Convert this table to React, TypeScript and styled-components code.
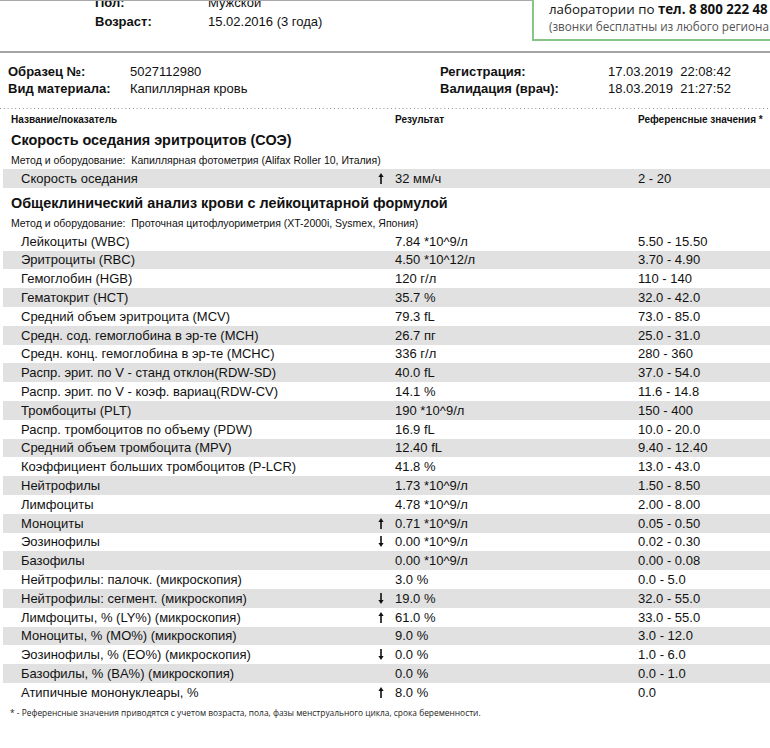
import React from "react";
import styled, { createGlobalStyle } from "styled-components";

const Global = createGlobalStyle`
  html, body { margin: 0; padding: 0; background: #fff; }
  body { font-family: "Liberation Sans", Arial, sans-serif; color: #111; }
`;

const Page = styled.div`
  width: 770px;
  height: 748px;
  overflow: hidden;
  background: #fff;
`;

const TopSection = styled.div`
  display: flex;
  align-items: flex-start;
  height: 51px;
  border-bottom: 2px solid #a4a4a4;
`;

const PatientBlock = styled.div`
  flex: 0 0 532px;
  height: 40px;
  border-top: 1px solid #a8a8a8;
  overflow: hidden;
`;

const PatientGrid = styled.div`
  display: grid;
  grid-template-columns: 113px 1fr;
  grid-auto-rows: 19px;
  align-items: center;
  margin-top: -8px;
  padding-left: 95px;
  font-size: 13px;
`;

const Label = styled.div`
  font-weight: bold;
  white-space: nowrap;
`;

const Value = styled.div`
  white-space: nowrap;
`;

const PromoBox = styled.div`
  flex: 1 1 auto;
  height: 41px;
  border: 2px solid #86c586;
  border-top: none;
  border-right: none;
  box-sizing: border-box;
  padding-left: 15px;
  font-family: "Open Sans", sans-serif;
  overflow: hidden;
  white-space: nowrap;
`;

const PromoLine = styled.div<{ $muted?: boolean }>`
  font-size: ${(p) => (p.$muted ? "11.7px" : "13.3px")};
  line-height: ${(p) => (p.$muted ? "16px" : "18px")};
  color: ${(p) => (p.$muted ? "#555" : "#111")};
  b { font-weight: 700; }
`;

const InfoGrid = styled.div`
  display: grid;
  grid-template-columns: 122px 310px 168px 1fr;
  grid-auto-rows: 17px;
  align-items: center;
  padding: 10px 0 0 8px;
  height: 55px;
  box-sizing: border-box;
  font-size: 13px;
`;

const Dotted = styled.div`
  height: 1px;
  background-image: linear-gradient(to right, #8a8a8a 1.4px, transparent 1.4px);
  background-size: 3.8px 1px;
`;

const HeaderRow = styled.div`
  display: grid;
  grid-template-columns: 384px 243px 1fr;
  align-items: center;
  height: 20px;
  padding-left: 11px;
  font-size: 10px;
  font-weight: bold;
  white-space: nowrap;
`;

const SectionTitle = styled.div`
  height: 22px;
  line-height: 22px;
  padding-left: 11px;
  font-size: 14.4px;
  font-weight: bold;
  white-space: nowrap;
`;

const Method = styled.div`
  height: 18px;
  line-height: 18px;
  padding-left: 11px;
  font-size: 10.5px;
  white-space: pre;
`;

const Rows = styled.div`
  margin: 0 0 4px 3px;
`;

const Row = styled.div<{ $shaded: boolean }>`
  display: grid;
  grid-template-columns: 372px 20px 243px 1fr;
  align-items: center;
  height: 18.8px;
  background: ${(p) => (p.$shaded ? "#e1e1e1" : "transparent")};
  font-size: 13px;
  white-space: nowrap;
`;

const Name = styled.div`
  padding-left: 18px;
`;

const ArrowCell = styled.div`
  display: flex;
  align-items: center;
  padding-left: 3px;
`;

const Footer = styled.div`
  margin-top: 4px;
  padding-left: 10px;
  font-family: "Open Sans", sans-serif;
  font-size: 8.4px;
  line-height: 14px;
  color: #222;
  white-space: nowrap;
`;

type Flag = "up" | "down" | undefined;

const Arrow = ({ dir }: { dir: Flag }) => {
  if (!dir) return null;
  return (
    <svg width="6" height="11" viewBox="0 0 6 11" aria-hidden="true">
      {dir === "up" ? (
        <>
          <polygon points="3,0 5.6,4 0.4,4" fill="#111" />
          <rect x="2.2" y="3" width="1.6" height="8" fill="#111" />
        </>
      ) : (
        <>
          <polygon points="3,11 5.6,7 0.4,7" fill="#111" />
          <rect x="2.2" y="0" width="1.6" height="8" fill="#111" />
        </>
      )}
    </svg>
  );
};

type Item = [string, Flag, string, string];

const esr: Item[] = [["Скорость оседания", "up", "32 мм/ч", "2 - 20"]];

const cbc: Item[] = [
  ["Лейкоциты (WBC)", undefined, "7.84 *10^9/л", "5.50 - 15.50"],
  ["Эритроциты (RBC)", undefined, "4.50 *10^12/л", "3.70 - 4.90"],
  ["Гемоглобин (HGB)", undefined, "120 г/л", "110 - 140"],
  ["Гематокрит (HCT)", undefined, "35.7 %", "32.0 - 42.0"],
  ["Средний объем эритроцита (MCV)", undefined, "79.3 fL", "73.0 - 85.0"],
  ["Средн. сод. гемоглобина в эр-те (MCH)", undefined, "26.7 пг", "25.0 - 31.0"],
  ["Средн. конц. гемоглобина в эр-те (MCHC)", undefined, "336 г/л", "280 - 360"],
  ["Распр. эрит. по V - станд отклон(RDW-SD)", undefined, "40.0 fL", "37.0 - 54.0"],
  ["Распр. эрит. по V - коэф. вариац(RDW-CV)", undefined, "14.1 %", "11.6 - 14.8"],
  ["Тромбоциты (PLT)", undefined, "190 *10^9/л", "150 - 400"],
  ["Распр. тромбоцитов по объему (PDW)", undefined, "16.9 fL", "10.0 - 20.0"],
  ["Средний объем тромбоцита (MPV)", undefined, "12.40 fL", "9.40 - 12.40"],
  ["Коэффициент больших тромбоцитов (P-LCR)", undefined, "41.8 %", "13.0 - 43.0"],
  ["Нейтрофилы", undefined, "1.73 *10^9/л", "1.50 - 8.50"],
  ["Лимфоциты", undefined, "4.78 *10^9/л", "2.00 - 8.00"],
  ["Моноциты", "up", "0.71 *10^9/л", "0.05 - 0.50"],
  ["Эозинофилы", "down", "0.00 *10^9/л", "0.02 - 0.30"],
  ["Базофилы", undefined, "0.00 *10^9/л", "0.00 - 0.08"],
  ["Нейтрофилы: палочк. (микроскопия)", undefined, "3.0 %", "0.0 - 5.0"],
  ["Нейтрофилы: сегмент. (микроскопия)", "down", "19.0 %", "32.0 - 55.0"],
  ["Лимфоциты, % (LY%) (микроскопия)", "up", "61.0 %", "33.0 - 55.0"],
  ["Моноциты, % (MO%) (микроскопия)", undefined, "9.0 %", "3.0 - 12.0"],
  ["Эозинофилы, % (EO%) (микроскопия)", "down", "0.0 %", "1.0 - 6.0"],
  ["Базофилы, % (BA%) (микроскопия)", undefined, "0.0 %", "0.0 - 1.0"],
  ["Атипичные мононуклеары, %", "up", "8.0 %", "0.0"],
];

const ResultRows = ({ items, startShaded }: { items: Item[]; startShaded: boolean }) => (
  <Rows>
    {items.map(([name, flag, value, ref], i) => (
      <Row key={name} $shaded={startShaded ? i % 2 === 0 : i % 2 === 1}>
        <Name>{name}</Name>
        <ArrowCell>
          <Arrow dir={flag} />
        </ArrowCell>
        <div>{value}</div>
        <div>{ref}</div>
      </Row>
    ))}
  </Rows>
);

export default function App() {
  return (
    <Page>
      <Global />
      <TopSection>
        <PatientBlock>
          <PatientGrid>
            <Label>Пол:</Label>
            <Value>Мужской</Value>
            <Label>Возраст:</Label>
            <Value>15.02.2016 (3 года)</Value>
          </PatientGrid>
        </PatientBlock>
        <PromoBox>
          <PromoLine>
            лаборатории по <b>тел. 8 800 222 48 30</b>
          </PromoLine>
          <PromoLine $muted>(звонки бесплатны из любого региона России)</PromoLine>
        </PromoBox>
      </TopSection>

      <InfoGrid>
        <Label>Образец №:</Label>
        <Value>5027112980</Value>
        <Label>Регистрация:</Label>
        <Value>17.03.2019&nbsp;&nbsp;22:08:42</Value>
        <Label>Вид материала:</Label>
        <Value>Капиллярная кровь</Value>
        <Label>Валидация (врач):</Label>
        <Value>18.03.2019&nbsp;&nbsp;21:27:52</Value>
      </InfoGrid>

      <Dotted />

      <HeaderRow>
        <div>Название/показатель</div>
        <div>Результат</div>
        <div>Референсные значения *</div>
      </HeaderRow>

      <SectionTitle>Скорость оседания эритроцитов (СОЭ)</SectionTitle>
      <Method>{"Метод и оборудование:  Капиллярная фотометрия (Alifax Roller 10, Италия)"}</Method>
      <ResultRows items={esr} startShaded />

      <SectionTitle>Общеклинический анализ крови с лейкоцитарной формулой</SectionTitle>
      <Method>{"Метод и оборудование:  Проточная цитофлуориметрия (XT-2000i, Sysmex, Япония)"}</Method>
      <ResultRows items={cbc} startShaded={false} />

      <Footer>
        * - Референсные значения приводятся с учетом возраста, пола, фазы менструального цикла, срока беременности.
      </Footer>
    </Page>
  );
}
